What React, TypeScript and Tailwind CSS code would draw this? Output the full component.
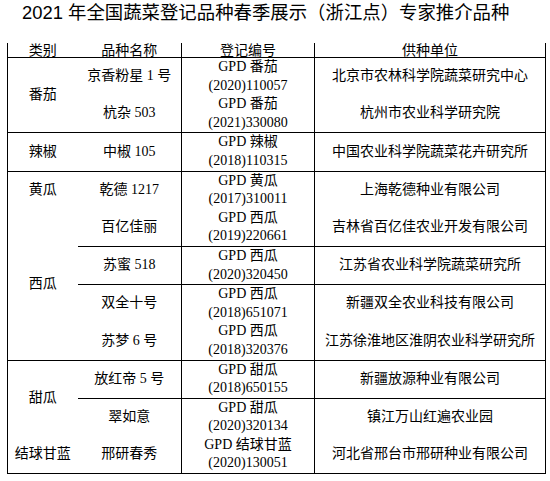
type Row = {
  cat?: { text: string; span: number; bottom: boolean };
  name: string;
  code: [string, string];
  unit: string;
  bottom: boolean;
};

const rows: Row[] = [
  { cat: { text: "番茄", span: 2, bottom: true }, name: "京香粉星 1 号", code: ["GPD 番茄", "(2020)110057"], unit: "北京市农林科学院蔬菜研究中心", bottom: false },
  { name: "杭杂 503", code: ["GPD 番茄", "(2021)330080"], unit: "杭州市农业科学研究院", bottom: true },
  { cat: { text: "辣椒", span: 1, bottom: true }, name: "中椒 105", code: ["GPD 辣椒", "(2018)110315"], unit: "中国农业科学院蔬菜花卉研究所", bottom: true },
  { cat: { text: "黄瓜", span: 1, bottom: false }, name: "乾德 1217", code: ["GPD 黄瓜", "(2017)310011"], unit: "上海乾德种业有限公司", bottom: false },
  { cat: { text: "西瓜", span: 4, bottom: true }, name: "百亿佳丽", code: ["GPD 西瓜", "(2019)220661"], unit: "吉林省百亿佳农业开发有限公司", bottom: true },
  { name: "苏蜜 518", code: ["GPD 西瓜", "(2020)320450"], unit: "江苏省农业科学院蔬菜研究所", bottom: true },
  { name: "双全十号", code: ["GPD 西瓜", "(2018)651071"], unit: "新疆双全农业科技有限公司", bottom: false },
  { name: "苏梦 6 号", code: ["GPD 西瓜", "(2018)320376"], unit: "江苏徐淮地区淮阴农业科学研究所", bottom: true },
  { cat: { text: "甜瓜", span: 2, bottom: false }, name: "放红帝 5 号", code: ["GPD 甜瓜", "(2018)650155"], unit: "新疆放源种业有限公司", bottom: true },
  { name: "翠如意", code: ["GPD 甜瓜", "(2020)320134"], unit: "镇江万山红遍农业园", bottom: false },
  { cat: { text: "结球甘蓝", span: 1, bottom: true }, name: "邢研春秀", code: ["GPD 结球甘蓝", "(2020)130051"], unit: "河北省邢台市邢研种业有限公司", bottom: true },
];

export default function App() {
  return (
    <div className="w-[550px] h-[481px] bg-white text-black overflow-hidden">
      <h1 className="pl-[22px] pt-[3px] h-[43px] text-[18.4px] leading-[20px] font-normal font-['Liberation_Sans','Noto_Sans_CJK_SC',sans-serif]">
        2021 年全国蔬菜登记品种春季展示（浙江点）专家推介品种
      </h1>

      <table className="ml-[7px] w-[538px] table-fixed border-collapse text-center text-[14px] font-['Liberation_Serif','Noto_Sans_CJK_SC',serif]">
        <colgroup>
          <col className="w-[70px]" />
          <col className="w-[104px]" />
          <col className="w-[133px]" />
          <col className="w-[231px]" />
        </colgroup>
        <thead>
          <tr className="h-[14px] leading-[14px] font-['Liberation_Sans','Noto_Sans_CJK_SC',sans-serif]">
            <th className="p-0 font-normal border-l border-b border-black">类别</th>
            <th className="p-0 font-normal border-r border-b border-black">品种名称</th>
            <th className="p-0 font-normal border-r border-b border-black">登记编号</th>
            <th className="p-0 font-normal border-r border-b border-black">供种单位</th>
          </tr>
        </thead>
        <tbody className="leading-[18.6px]">
          {rows.map((r, i) => (
            <tr key={i}>
              {r.cat && (
                <td
                  rowSpan={r.cat.span}
                  className={r.cat.bottom ? "p-0 border-l border-b border-black" : "p-0 border-l border-black"}
                >
                  {r.cat.text}
                </td>
              )}
              <td className={r.bottom ? "p-0 border-r border-b border-black" : "p-0 border-r border-black"}>
                {r.name}
              </td>
              <td className={r.bottom ? "p-0 border-r border-b border-black" : "p-0 border-r border-black"}>
                <div>{r.code[0]}</div>
                <div>{r.code[1]}</div>
              </td>
              <td className={r.bottom ? "p-0 border-r border-b border-black" : "p-0 border-r border-black"}>
                {r.unit}
              </td>
            </tr>
          ))}
        </tbody>
      </table>
    </div>
  );
}
